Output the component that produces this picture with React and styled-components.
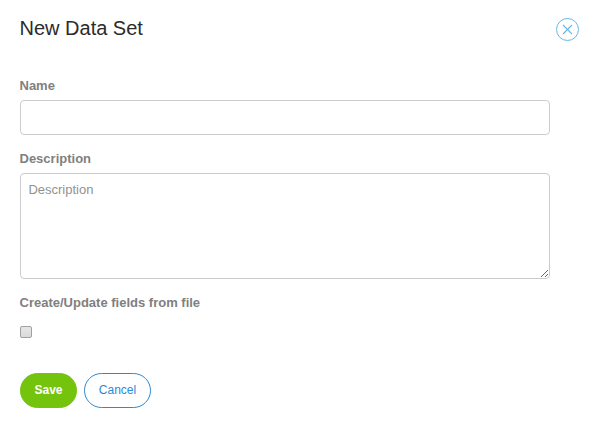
import React from "react";
import styled, { createGlobalStyle } from "styled-components";

const GlobalStyle = createGlobalStyle`
  * { box-sizing: border-box; }
  body { margin: 0; background: #fff; font-family: "Liberation Sans", Arial, sans-serif; }
`;
const Dialog = styled.main`
  width: 600px;
  height: 428px;
  padding: 17px 20px 0;
  background: #fff;
`;
const Header = styled.header`
  display: flex;
  justify-content: space-between;
  align-items: flex-start;
  height: 61px;
`;
const Title = styled.h1`
  margin: 0 0 0 -0.5px;
  font: 400 20px/23px "Liberation Sans", Arial, sans-serif;
  color: #2b2b2b;
`;
const CloseButton = styled.button`
  display: flex;
  width: 25px;
  height: 25px;
  padding: 0;
  border: 0;
  background: none;
`;
const Form = styled.form`
  display: flex;
  flex-direction: column;
  align-items: flex-start;
`;
const Label = styled.label`
  height: 22px;
  margin-left: -0.5px;
  font: 700 13px/15px "Liberation Sans", Arial, sans-serif;
  color: #808080;
`;
const Input = styled.input`
  width: 530px;
  height: 35px;
  margin: 0 0 16px;
  padding: 0 8px;
  border: 1px solid #ccc;
  border-radius: 4px;
`;
const TextArea = styled.textarea`
  width: 530px;
  height: 106px;
  margin: 0 0 16px;
  padding: 8px 7.4px;
  border: 1px solid #ccc;
  border-radius: 4px;
  font: 400 13px/16px "Liberation Sans", Arial, sans-serif;
  resize: both;
  &::placeholder { color: #929292; }
`;
const Checkbox = styled.input`
  appearance: none;
  width: 12px;
  height: 12px;
  margin: 9px 0 35px;
  border: 1px solid #a0a0a0;
  border-radius: 2px;
  background: linear-gradient(#e6e6e6, #dadada);
`;
const Actions = styled.div`
  display: flex;
  gap: 7px;
`;
const Button = styled.button`
  width: ${(p) => (p.$primary ? 57 : 67)}px;
  height: 35px;
  padding: 0 0 2px;
  border: 1px solid ${(p) => (p.$primary ? "#74c40e" : "#2b8ad4")};
  border-radius: 18px;
  background: ${(p) => (p.$primary ? "#74c40e" : "#fff")};
  color: ${(p) => (p.$primary ? "#fff" : "#2b8ad4")};
  font: ${(p) => (p.$primary ? 700 : 400)} 12px/14px "Liberation Sans", Arial, sans-serif;
`;

export default function App() {
  return (
    <Dialog>
      <GlobalStyle />
      <Header>
        <Title>New Data Set</Title>
        <CloseButton aria-label="Close">
          <svg width="25" height="25" viewBox="0 0 25 25" fill="none" stroke="#64b8e6">
            <circle cx="12.5" cy="12.5" r="11" />
            <path d="M8 8l9 9M17 8l-9 9" strokeWidth="1.1" />
          </svg>
        </CloseButton>
      </Header>
      <Form>
        <Label htmlFor="name">Name</Label>
        <Input id="name" />
        <Label htmlFor="description">Description</Label>
        <TextArea id="description" placeholder="Description" />
        <Label htmlFor="from-file">Create/Update fields from file</Label>
        <Checkbox id="from-file" type="checkbox" />
        <Actions>
          <Button type="button" $primary>Save</Button>
          <Button type="button">Cancel</Button>
        </Actions>
      </Form>
    </Dialog>
  );
}
